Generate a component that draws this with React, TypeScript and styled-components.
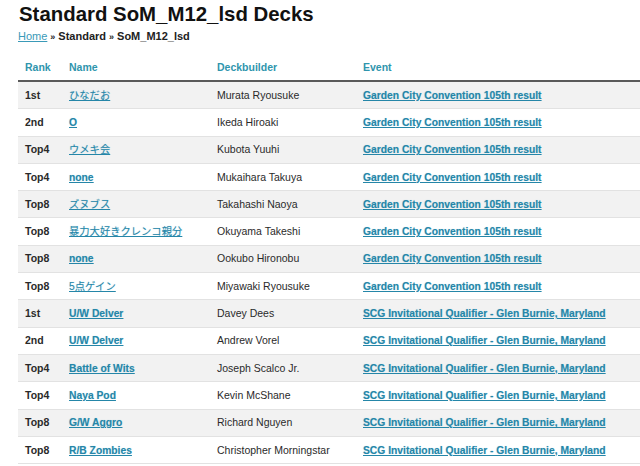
import React from "react";
import styled, { createGlobalStyle } from "styled-components";

const Global = createGlobalStyle`
  html, body { margin: 0; padding: 0; background: #fff; overflow: hidden; }
  body { font-family: "Liberation Sans", Arial, "Noto Sans CJK JP", sans-serif; color: #222; }
`;

const Page = styled.div`
  padding: 0 0 0 18px;
  width: 680px;
`;

const Title = styled.h1`
  margin: 2px 0 0 1px;
  font-size: 20.4px;
  line-height: 24px;
  font-weight: bold;
  color: #111;
`;

const Crumbs = styled.div`
  margin-top: 4px;
  font-size: 11px;
  line-height: 13px;
  font-weight: bold;
  color: #222;
`;

const CrumbLink = styled.a`
  color: #3a9ab8;
  font-weight: normal;
  text-decoration: underline;
`;

const Sep = styled.span`
  font-size: 9px;
  margin: 0 3px;
`;

const Table = styled.table`
  margin-top: 12px;
  border-collapse: collapse;
  width: 660px;
  table-layout: fixed;
`;

const Th = styled.th<{ $w?: number }>`
  ${(p) => (p.$w ? `width: ${p.$w}px;` : "")}
  text-align: left;
  padding: 0 0 2px 7px;
  height: 22px;
  font-size: 10.5px;
  line-height: 13px;
  font-weight: bold;
  color: #2f95ad;
  border-bottom: 2px solid #5a5a5a;
  vertical-align: middle;
`;

const Tr = styled.tr<{ $odd: boolean }>`
  background: ${(p) => (p.$odd ? "#f2f2f2" : "#ffffff")};
  border-bottom: 1px solid #e2e2e2;
`;

const Td = styled.td<{ $bold?: boolean }>`
  padding: 0 0 0 7px;
  height: 26.3px;
  font-size: 10.5px;
  line-height: 13px;
  vertical-align: middle;
  white-space: nowrap;
  color: #2a2a2a;
  font-weight: ${(p) => (p.$bold ? "bold" : "normal")};
`;

const Link = styled.a<{ $cjk?: boolean }>`
  color: #2586a8;
  font-size: 10.3px;
  font-weight: ${(p) => (p.$cjk ? "normal" : "bold")};
  text-decoration: underline;
  text-shadow: 0 0 1px rgba(40, 150, 190, 0.35);
`;

type Row = { rank: string; name: string; cjk?: boolean; builder: string; event: string };

const gc = "Garden City Convention 105th result";
const scg = "SCG Invitational Qualifier - Glen Burnie, Maryland";

const rows: Row[] = [
  { rank: "1st", name: "ひなだお", cjk: true, builder: "Murata Ryousuke", event: gc },
  { rank: "2nd", name: "O", builder: "Ikeda Hiroaki", event: gc },
  { rank: "Top4", name: "ウメキ会", cjk: true, builder: "Kubota Yuuhi", event: gc },
  { rank: "Top4", name: "none", builder: "Mukaihara Takuya", event: gc },
  { rank: "Top8", name: "ズヌブス", cjk: true, builder: "Takahashi Naoya", event: gc },
  { rank: "Top8", name: "暴力大好きクレンコ親分", cjk: true, builder: "Okuyama Takeshi", event: gc },
  { rank: "Top8", name: "none", builder: "Ookubo Hironobu", event: gc },
  { rank: "Top8", name: "5点ゲイン", cjk: true, builder: "Miyawaki Ryousuke", event: gc },
  { rank: "1st", name: "U/W Delver", builder: "Davey Dees", event: scg },
  { rank: "2nd", name: "U/W Delver", builder: "Andrew Vorel", event: scg },
  { rank: "Top4", name: "Battle of Wits", builder: "Joseph Scalco Jr.", event: scg },
  { rank: "Top4", name: "Naya Pod", builder: "Kevin McShane", event: scg },
  { rank: "Top8", name: "G/W Aggro", builder: "Richard Nguyen", event: scg },
  { rank: "Top8", name: "R/B Zombies", builder: "Christopher Morningstar", event: scg },
];

export default function App() {
  return (
    <>
      <Global />
      <Page>
        <Title>Standard SoM_M12_lsd Decks</Title>
        <Crumbs>
          <CrumbLink href="#">Home</CrumbLink>
          <Sep>»</Sep>Standard<Sep>»</Sep>SoM_M12_lsd
        </Crumbs>
        <Table>
          <thead>
            <tr>
              <Th $w={37}>Rank</Th>
              <Th $w={141}>Name</Th>
              <Th $w={139}>Deckbuilder</Th>
              <Th>Event</Th>
            </tr>
          </thead>
          <tbody>
            {rows.map((r, i) => (
              <Tr key={i} $odd={i % 2 === 0}>
                <Td $bold>{r.rank}</Td>
                <Td>{r.name && <Link href="#" $cjk={r.cjk}>{r.name}</Link>}</Td>
                <Td>{r.builder}</Td>
                <Td>{r.event && <Link href="#">{r.event}</Link>}</Td>
              </Tr>
            ))}
          </tbody>
        </Table>
      </Page>
    </>
  );
}
